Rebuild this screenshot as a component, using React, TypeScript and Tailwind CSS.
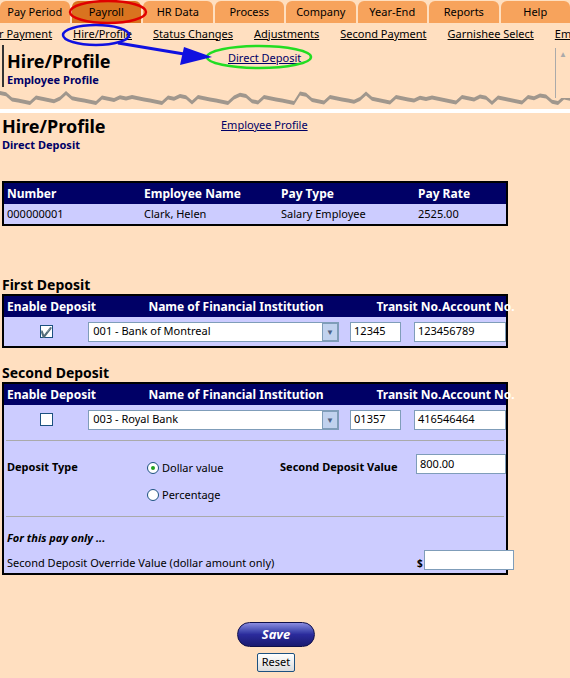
import React from "react";

const tabs = ["Pay Period", "Payroll", "HR Data", "Process", "Company", "Year-End", "Reports", "Help"];
const subs = ["r Payment", "Hire/Profile", "Status Changes", "Adjustments", "Second Payment", "Garnishee Select", "Empl"];

function TornEdge() {
  let d = "M0 0 L570 0 L570 14 ";
  for (let x = 570; x >= 0; x -= 6) {
    const y = 8 + ((x * 37) % 11) * 0.6 + (x % 60 < 10 ? -4 : 0);
    d += `L${x} ${y.toFixed(1)} `;
  }
  d += "Z";
  return (
    <svg width="570" height="22" className="block">
      <path d={d} transform="translate(0,4)" fill="#777" opacity="0.7" />
      <path d={d} fill="#ffdfc0" />
    </svg>
  );
}

function DepositTable({ checked, bank, transit, account, children }: any) {
  return (
    <div className="mx-[2px] w-[506px] border-2 border-black bg-[#ccccff]">
      <div className="grid grid-cols-[92px_280px_66px_1fr] bg-[#000066] text-white font-bold text-[12px] h-[21px] items-center whitespace-nowrap">
        <div className="pl-[3px]">Enable Deposit</div>
        <div className="text-center">Name of Financial Institution</div>
        <div className="text-center">Transit No.</div>
        <div className="text-center">Account No.</div>
      </div>
      <div className="flex items-center h-[29px] text-[11px]">
        <div className="w-[92px] flex justify-center">
          <div className="w-[13px] h-[13px] border border-[#1c5180] bg-white flex items-center justify-center text-[#21a121] text-[10px] leading-none">
            {checked ? "✔" : ""}
          </div>
        </div>
        <div className="w-[273px] h-[20px] bg-white border border-[#7f9db9] flex items-center justify-between pl-[4px]">
          <span>{bank}</span>
          <div className="w-[16px] h-[18px] bg-[#c1d2ee] border border-[#7f9db9] flex items-center justify-center text-[8px] text-[#4d6185]">▼</div>
        </div>
        <div className="ml-[11px] w-[55px] h-[20px] bg-white border border-[#7f9db9] pl-[3px] flex items-center">{transit}</div>
        <div className="ml-[13px] w-[100px] h-[20px] bg-white border border-[#7f9db9] pl-[3px] flex items-center">{account}</div>
      </div>
      {children}
    </div>
  );
}

export default function App() {
  return (
    <div className="w-[570px] h-[678px] overflow-hidden bg-[#ffdfc0] [font-family:'Liberation_Sans',Arial,sans-serif] text-black relative">
      <div className="flex gap-[2px] h-[23px] bg-[#ffdfc0] pt-[1px]">
        {tabs.map((t) => (
          <div
            key={t}
            className={`flex-1 rounded-t-[6px] flex items-center justify-center text-[11px] ${t === "Payroll" ? "bg-[#d9731f]" : "bg-[#f7a35c]"}`}
          >
            {t}
          </div>
        ))}
      </div>
      <div className="flex gap-[21px] h-[22px] items-center text-[11px] whitespace-nowrap -ml-[1px]">
        {subs.map((s) => (
          <span key={s} className="underline">{s}</span>
        ))}
      </div>
      <div className="relative h-[42px] pl-[3px] border-l-2 border-[#333] ml-[2px]">
        <div className="text-[18px] font-bold leading-[24px] pt-[4px]">Hire/Profile</div>
        <div className="text-[11px] font-bold text-[#000066] -mt-[1px]">Employee Profile</div>
        <span className="absolute left-[224px] top-[5px] text-[11px] text-[#000066] underline">Direct Deposit</span>
      </div>
      <TornEdge />
      <div className="h-[4px] bg-white" />
      <div className="relative pl-[2px] pt-[2px] h-[68px]">
        <div className="text-[18px] font-bold leading-[22px]">Hire/Profile</div>
        <div className="text-[11px] font-bold text-[#000066]">Direct Deposit</div>
        <span className="absolute left-[221px] top-[4px] text-[11px] text-[#000066] underline">Employee Profile</span>
      </div>
      <div className="mx-[2px] w-[506px] border-2 border-black">
        <div className="grid grid-cols-[137px_137px_137px_1fr] bg-[#000066] text-white font-bold text-[12px] h-[21px] items-center pl-[3px]">
          <div>Number</div><div>Employee Name</div><div>Pay Type</div><div>Pay Rate</div>
        </div>
        <div className="grid grid-cols-[137px_137px_137px_1fr] bg-[#ccccff] text-[11px] h-[20px] items-center pl-[3px]">
          <div>000000001</div><div>Clark, Helen</div><div>Salary Employee</div><div>2525.00</div>
        </div>
      </div>
      <div className="h-[50px]" />
      <div className="pl-[2px] text-[14px] font-bold leading-[18px]">First Deposit</div>
      <DepositTable checked bank="001 - Bank of Montreal" transit="12345" account="123456789" />
      <div className="h-[16px]" />
      <div className="pl-[2px] text-[14px] font-bold leading-[18px]">Second Deposit</div>
      <DepositTable bank="003 - Royal Bank" transit="01357" account="416546464">
        <div className="mx-[2px] border-t border-[#aaa] mt-[6px]" />
        <div className="relative h-[75px] text-[11px]">
          <span className="absolute left-[3px] top-[18px] font-bold">Deposit Type</span>
          <span className="absolute left-[143px] top-[19px] flex items-center gap-[3px]">
            <span className="w-[12px] h-[12px] rounded-full border border-[#1c5180] bg-white flex items-center justify-center"><span className="w-[4px] h-[4px] rounded-full bg-[#21a121]" /></span>Dollar value
          </span>
          <span className="absolute left-[143px] top-[46px] flex items-center gap-[3px]">
            <span className="w-[12px] h-[12px] rounded-full border border-[#1c5180] bg-white" />Percentage
          </span>
          <span className="absolute left-[276px] top-[18px] font-bold">Second Deposit Value</span>
          <span className="absolute left-[412px] top-[13px] w-[90px] h-[20px] bg-white border border-[#7f9db9] pl-[3px] flex items-center">800.00</span>
        </div>
        <div className="mx-[2px] border-t border-[#aaa]" />
        <div className="relative h-[56px] text-[11px]">
          <span className="absolute left-[3px] top-[13px] font-bold italic">For this pay only ...</span>
          <span className="absolute left-[3px] top-[38px]">Second Deposit Override Value (dollar amount only)</span>
          <span className="absolute left-[413px] top-[39px] font-bold text-[10px]">$</span>
          <span className="absolute left-[420px] top-[33px] w-[90px] h-[20px] bg-white border border-[#7f9db9]" />
        </div>
      </DepositTable>
      <div className="flex flex-col items-center w-[552px] mt-[47px] gap-[6px]">
        <div className="w-[78px] h-[25px] rounded-full bg-gradient-to-b from-[#8c8ce0] via-[#2b2b9c] to-[#1a1a70] border border-[#10104a] text-white font-bold italic text-[13px] flex items-center justify-center">Save</div>
        <div className="w-[38px] h-[19px] bg-gradient-to-b from-white to-[#dcdcdc] border border-[#1c5180] rounded-[2px] text-[11px] flex items-center justify-center">Reset</div>
      </div>
      <svg className="absolute left-0 top-0 pointer-events-none" width="570" height="100">
        <ellipse cx="108" cy="12" rx="38" ry="11" fill="none" stroke="#e00000" strokeWidth="2.5" />
        <ellipse cx="96" cy="35" rx="33" ry="10" fill="none" stroke="#1010e0" strokeWidth="2.5" />
        <ellipse cx="259" cy="57" rx="52" ry="11" fill="none" stroke="#22dd22" strokeWidth="2.5" />
        <line x1="118" y1="43" x2="190" y2="55" stroke="#1010e0" strokeWidth="3" />
        <polygon points="212,57 184,47 180,65" fill="#1010e0" />
      </svg>
      <div className="absolute right-0 top-[48px] w-[15px] h-[50px] border-l border-[#aaa] bg-[#ffdfc0] flex justify-center text-[8px] text-[#aaa]">▲</div>
    </div>
  );
}
